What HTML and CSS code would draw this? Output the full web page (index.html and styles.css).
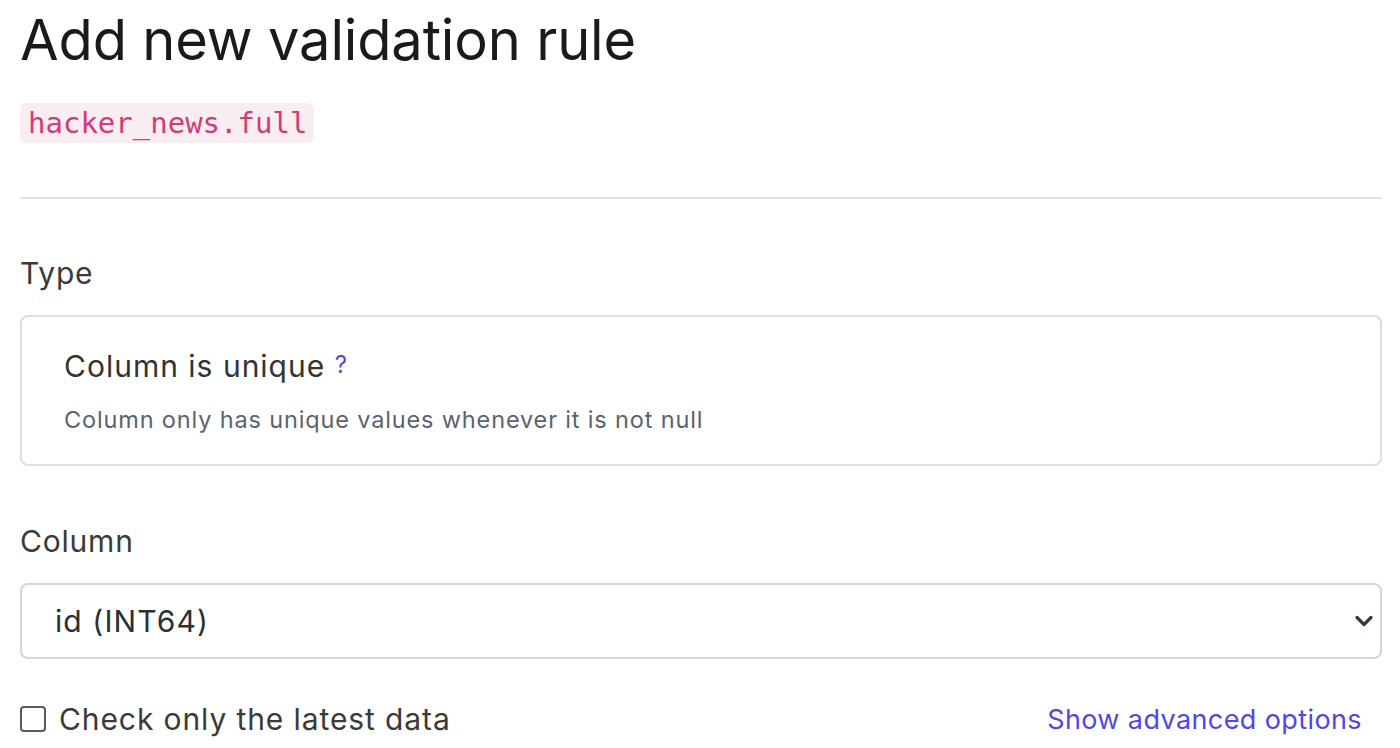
FILE: index.html
```html
<!DOCTYPE html>
<html lang="en">
<head>
<meta charset="UTF-8">
<title>Add new validation rule</title>
<link rel="stylesheet" href="styles.css">
</head>
<body>
  <div class="page">
    <h1 class="title">Add new validation rule</h1>
    <div class="table-name"><code>hacker_news.full</code></div>
    <hr class="divider">

    <div class="field">
      <div class="label">Type</div>
      <div class="type-card">
        <div class="type-title">Column is unique <span class="help">?</span></div>
        <div class="type-desc">Column only has unique values whenever it is not null</div>
      </div>
    </div>

    <div class="field">
      <div class="label">Column</div>
      <div class="select">
        <span>id (INT64)</span>
        <svg class="chevron" width="20" height="14" viewBox="0 0 20 14">
          <path d="M3 3.5L10 10.5L17 3.5" fill="none" stroke="#333a44" stroke-width="3.2" stroke-linecap="round" stroke-linejoin="round"/>
        </svg>
      </div>
    </div>

    <div class="bottom-row">
      <label class="check">
        <span class="box"></span>
        Check only the latest data
      </label>
      <a class="advanced" href="#">Show advanced options</a>
    </div>
  </div>
</body>
</html>
```

FILE: styles.css
```css
body {
    margin: 0;
    font-family: Inter, "Noto Sans", sans-serif;
    color: #333;
    background: #fff;
}
.page {
    padding: 6px 18px 0 20px;
}
.title {
    font-size: 56px;
    font-weight: 400;
    color: #1a1a1a;
    margin: 0;
    line-height: 68px;
    letter-spacing: -0.15px;
}
.table-name {
    margin-top: 29px;
}
.table-name code {
    display: inline-block;
    font-family: "DejaVu Sans Mono", monospace;
    font-size: 29px;
    color: #d63a74;
    background: #f8eef2;
    border-radius: 6px;
    padding: 0 7px 0 8px;
    line-height: 40px;
}
.divider {
    border: none;
    border-top: 2px solid #e3e3e3;
    margin: 54px 0 0 0;
}
.field {
    margin-top: 56px;
}
.field + .field {
    margin-top: 57px;
}
.label {
    font-size: 30px;
    letter-spacing: 0.8px;
    color: #3a3a3a;
    line-height: 36px;
}
.type-card {
    margin-top: 24px;
    border: 2px solid #dedede;
    border-radius: 8px;
    padding: 30px 42px 29px;
}
.type-title {
    font-size: 30px;
    letter-spacing: 1px;
    color: #333;
    line-height: 36px;
}
.help {
    color: #5548f0;
    font-size: 24px;
    vertical-align: 4px;
}
.type-desc {
    margin-top: 21px;
    font-size: 23.5px;
    letter-spacing: 0.85px;
    color: #5b6270;
    line-height: 30px;
}
.select {
    margin-top: 24px;
    border: 2px solid #d4d6da;
    border-radius: 8px;
    height: 72px;
    display: flex;
    align-items: center;
    justify-content: space-between;
    padding: 0 6px 0 33px;
    font-size: 30px;
    letter-spacing: 1.1px;
    color: #2b2f36;
}
.bottom-row {
    display: flex;
    justify-content: space-between;
    align-items: center;
    margin-top: 42px;
    padding-right: 20px;
}
.check {
    display: flex;
    align-items: center;
    gap: 13px;
    font-size: 30px;
    letter-spacing: 0.9px;
    color: #3a3a3a;
}
.box {
    width: 22px;
    height: 22px;
    border: 2px solid #5a5a5a;
    border-radius: 4px;
}
.advanced {
    font-size: 27px;
    letter-spacing: 0.4px;
    color: #5146ec;
    text-decoration: none;
}
```
